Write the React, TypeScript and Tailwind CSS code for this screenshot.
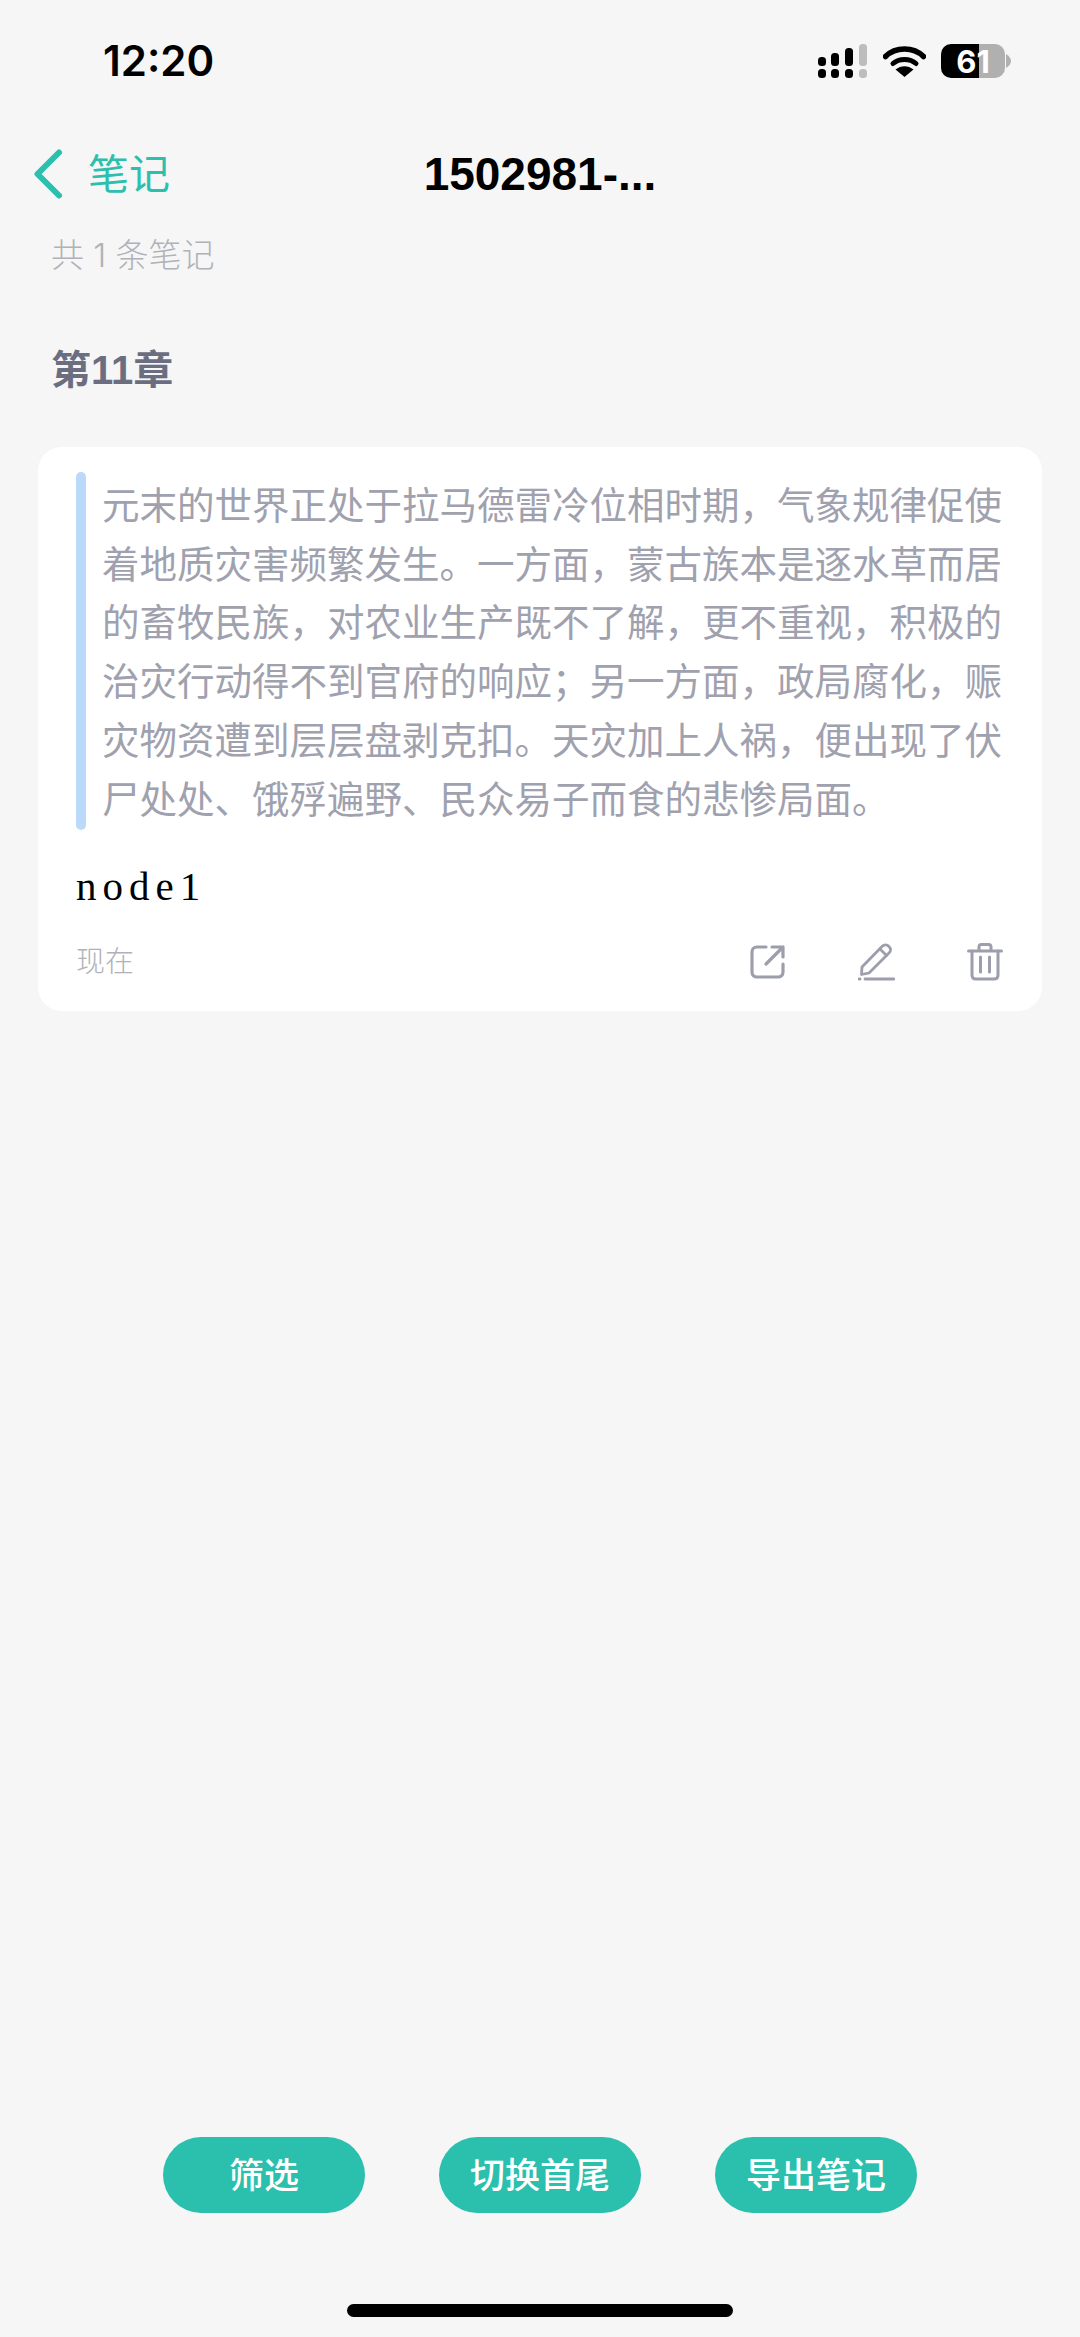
export default function App() {
  const cjk = "font-['Inter','Noto_Sans_CJK_SC',sans-serif]";
  return (
    <div className={`flex h-[2337px] w-[1080px] flex-col overflow-hidden bg-[#f6f6f6] ${cjk}`}>
      <div className="flex h-[122px] shrink-0 items-center justify-between pl-[103px] pr-[69px]">
        <span className="text-[42px] font-semibold leading-none text-black">12:20</span>
        <div className="flex items-center gap-[15px]">
          <svg width="50" height="35" viewBox="0 0 50 35">
            <g fill="#000">
              <rect x="0" y="13" width="8" height="9" rx="3.5" />
              <rect x="0" y="25" width="8" height="9" rx="3.5" />
              <rect x="13" y="9" width="8" height="13" rx="3.5" />
              <rect x="13" y="25" width="8" height="9" rx="3.5" />
              <rect x="27" y="4" width="8" height="18" rx="3.5" />
              <rect x="27" y="25" width="8" height="9" rx="3.5" />
            </g>
            <g fill="#bdbdbd">
              <rect x="41" y="0" width="8" height="22" rx="3.5" />
              <rect x="41" y="25" width="8" height="9" rx="3.5" />
            </g>
          </svg>
          <svg width="43" height="32" viewBox="0 0 43 32" fill="none">
            <path d="M2.5 11.5C12.5 1.5 30.5 1.5 40.5 11.5" stroke="#000" strokeWidth="5.5" strokeLinecap="round" />
            <path d="M10 18.5C16 13 27 13 33 18.5" stroke="#000" strokeWidth="5" strokeLinecap="round" />
            <path d="M12.5 24.5L21.5 32L30.5 24.5C25 20 18 20 12.5 24.5Z" fill="#000" />
          </svg>
          <div className="flex items-center">
            <div className="flex h-[34px] w-[64px] items-center justify-center rounded-[10px] bg-[linear-gradient(90deg,#000_59%,#b0b0b0_59%)] text-[31px] font-bold leading-none text-white">
              61
            </div>
            <svg width="5" height="14" viewBox="0 0 5 14" className="ml-[1px]">
              <path d="M0 0C3 2 5 4 5 7C5 10 3 12 0 14Z" fill="#b0b0b0" />
            </svg>
          </div>
        </div>
      </div>

      <div className="grid h-[104px] shrink-0 grid-cols-[1fr_auto_1fr] items-center">
        <div className="flex items-center pl-[33px] text-[#2bbfae]">
          <svg width="30" height="50" viewBox="0 0 30 50" fill="none">
            <path d="M26 3.5L4.5 25L26 46.5" stroke="#2bbfae" strokeWidth="6" strokeLinecap="round" strokeLinejoin="round" />
          </svg>
          <span className="ml-[25px] text-[41px] leading-none">笔记</span>
        </div>
        <span className="font-['Liberation_Sans',sans-serif] text-[46px] font-bold leading-none text-black">1502981-...</span>
        <div />
      </div>

      <div className="flex h-[60px] shrink-0 items-center pl-[51px] text-[33px] font-light text-[#b0b2b8]">共 1 条笔记</div>
      <div className="mt-[54px] flex h-[60px] shrink-0 items-center pl-[51px] font-['Liberation_Sans','Noto_Sans_CJK_SC',sans-serif] text-[40px] font-bold text-[#6b6e80]">第11章</div>

      <div className="ml-[38px] mt-[47px] w-[1004px] rounded-[24px] bg-white pl-[38px] pr-[38px] pt-[25px]">
        <div className="flex gap-[16px]">
          <div className="w-[10px] shrink-0 rounded-full bg-[#bbdafa]" />
          <p className="w-[902px] pb-[1px] pt-[5px] text-[37.5px] font-normal leading-[58.7px] text-[#9fa1ae]">
            元末的世界正处于拉马德雷冷位相时期，气象规律促使着地质灾害频繁发生。一方面，蒙古族本是逐水草而居的畜牧民族，对农业生产既不了解，更不重视，积极的治灾行动得不到官府的响应；另一方面，政局腐化，赈灾物资遭到层层盘剥克扣。天灾加上人祸，便出现了伏尸处处、饿殍遍野、民众易子而食的悲惨局面。
          </p>
        </div>
        <p className="mt-[32px] font-['Liberation_Serif',serif] text-[41px] leading-[48px] tracking-[6px] text-black">node1</p>
        <div className="mt-[28px] flex h-[48px] items-center justify-between">
          <span className="text-[29px] font-light text-[#b0b2b8]">现在</span>
          <div className="flex items-center gap-[72px] pr-[1px]">
            <svg width="36" height="36" viewBox="0 0 36 36" fill="none" stroke="#9c9eac" strokeWidth="3.2" strokeLinecap="round" strokeLinejoin="round">
              <path d="M16 3H7C4 3 2 5 2 8V28C2 31 4 33 7 33H28C31 33 33 31 33 28V20" />
              <path d="M16 20L33 3M22 3H33V13" />
            </svg>
            <svg width="37" height="38" viewBox="0 0 37 38" fill="none" stroke="#9c9eac" strokeWidth="2.8" strokeLinecap="round" strokeLinejoin="round">
              <path d="M4 24L24 3.5C26 1.5 29 1.5 31 3.5C33 5.5 33 8 31 10L11 30L3.5 31.5Z" />
              <path d="M22 6L28.5 12.5" />
              <path d="M7 36H36M1 36H2" />
            </svg>
            <svg width="36" height="38" viewBox="0 0 36 38" fill="none" stroke="#9c9eac" strokeWidth="3" strokeLinecap="round" strokeLinejoin="round">
              <path d="M1.5 8H34.5" />
              <path d="M12 7V4C12 2.5 13 1.5 14.5 1.5H21.5C23 1.5 24 2.5 24 4V7" />
              <path d="M5 8V32C5 34.5 6.5 36 9 36H27C29.5 36 31 34.5 31 32V8" />
              <path d="M13.5 14V29M22.5 14V29" />
            </svg>
          </div>
        </div>
        <div className="h-[25px]" />
      </div>

      <div className="flex-1" />

      <div className="flex shrink-0 justify-center gap-[74px]">
        {["筛选", "切换首尾", "导出笔记"].map((t) => (
          <div key={t} className="flex h-[76px] w-[202px] items-center justify-center rounded-full bg-[#2bbfae] text-[35px] font-medium text-white">
            {t}
          </div>
        ))}
      </div>
      <div className="mt-[91px] mb-[20px] flex shrink-0 justify-center">
        <div className="h-[13px] w-[386px] rounded-full bg-black" />
      </div>
    </div>
  );
}
